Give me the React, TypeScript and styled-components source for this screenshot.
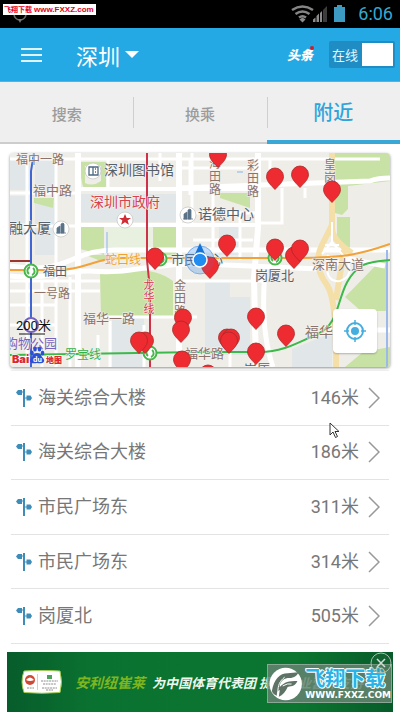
import React from "react";
import styled, { createGlobalStyle } from "styled-components";

const sans = `Roboto, "Noto Sans CJK SC", sans-serif`;
const cjk = `"Noto Sans CJK SC", sans-serif`;

const GlobalStyle = createGlobalStyle`
  * { box-sizing: border-box; }
  body { margin: 0; background: #fff; font-family: ${sans}; color: #777; }
  button { border: 0; padding: 0; background: none; font: inherit; color: inherit; cursor: pointer; }
  ul { list-style: none; margin: 0; padding: 0; }
  svg { display: block; }
`;

const Page = styled.div`
  position: relative;
  min-height: 100vh;
  display: flex;
  flex-direction: column;
  overflow: hidden;
`;

const StatusBar = styled.div`
  position: relative;
  display: flex;
  align-items: center;
  justify-content: flex-end;
  height: 28px;
  padding-right: 7px;
  background: #000;
`;

const LocationMark = styled.svg`
  position: absolute;
  left: 12px;
  top: 7px;
`;

const SiteTag = styled.div`
  position: absolute;
  left: 3px;
  top: 4px;
  display: flex;
  gap: 2px;
  padding: 0 2px 0 1px;
  background: #fff;
  color: #e2001a;
  font: 700 8px/11px "Liberation Sans", sans-serif;
  white-space: nowrap;
`;

const TagName = styled.span`
  font: 700 7px/11px ${cjk};
`;

const Clock = styled.time`
  margin-left: 12px;
  font-size: 18px;
  line-height: 28px;
  color: #35a9d2;
`;

const Header = styled.header`
  display: flex;
  align-items: center;
  height: 54px;
  padding: 0 5px 0 21px;
  background: #24a9e4;
  color: #fff;
  border-bottom: 1px solid #5fb0d4;
`;

const City = styled.button`
  display: flex;
  align-items: center;
  gap: 5px;
  margin-left: 34px;
  font: 400 22px/32px ${cjk};
  color: #fff;
`;

const Headlines = styled.button`
  position: relative;
  margin-left: auto;
  font: italic 900 13px/18px ${cjk};
  color: #fff;
`;

const Dot = styled.i`
  position: absolute;
  right: -1px;
  top: 0;
  width: 4px;
  height: 4px;
  border-radius: 50%;
  background: #c8202f;
`;

const OnlineSwitch = styled.label`
  display: flex;
  align-items: center;
  gap: 4px;
  height: 27px;
  margin-left: 16px;
  padding: 0 2px 0 3px;
  border-radius: 2px;
  background: #1f8dc3;
  font: 400 13px/27px ${cjk};
  color: #e6f6ff;
`;

const SwitchInput = styled.input`
  appearance: none;
  margin: 0;
  width: 31px;
  height: 23px;
  background: #fff;
`;

const Tabs = styled.nav`
  display: grid;
  grid-template-columns: repeat(3, 1fr);
  height: 62px;
  background: #efefef;
`;

const Tab = styled.button<{ $active?: boolean }>`
  position: relative;
  padding-top: ${(p) => (p.$active ? 2 : 4)}px;
  border-bottom: ${(p) => (p.$active ? "4px solid #3aa8d6" : "2px solid #cdcdcd")};
  font: ${(p) => (p.$active ? "500 20px" : "500 15px")}/24px ${cjk};
  color: ${(p) => (p.$active ? "#2fa4dc" : "#9c9c9c")};

  &:not(:first-child)::before {
    content: "";
    position: absolute;
    left: 0;
    top: 15px;
    width: 1px;
    height: 31px;
    background: #cfcfcf;
  }
`;

const MapCard = styled.section`
  position: relative;
  margin: 9px 10px 2px;
  border-radius: 4px;
  overflow: hidden;
  box-shadow: 0 1px 3px rgba(0, 0, 0, 0.45);
`;

const MapDrawing = styled.svg`
  width: 100%;
  height: auto;
  font-family: ${cjk};
`;

const LocateButton = styled.button`
  position: absolute;
  right: 13px;
  bottom: 14px;
  width: 44px;
  height: 44px;
  display: grid;
  place-items: center;
  border-radius: 4px;
  background: #fff;
  box-shadow: 0 1px 2px rgba(0, 0, 0, 0.25);
`;

const StopList = styled.ul`
  display: grid;
  grid-auto-rows: 1fr;
  min-height: 274px;
  margin: 1px 11px 0;
  border-top: 1px solid #f2f2f2;
`;

const StopItem = styled.li`
  display: flex;
  border-bottom: 1px solid #e3e3e3;
`;

const StopButton = styled.button`
  flex: 1;
  display: flex;
  align-items: center;
  padding: 0 9px 0 5px;
  font-size: 18px;
  line-height: 24px;
  color: #777;
`;

const StopName = styled.span`
  flex: 1;
  margin-left: 5px;
  text-align: left;
`;

const Distance = styled.span`
  margin-right: 9px;
`;

const Pointer = styled.svg`
  position: absolute;
  left: 329px;
  top: 422px;
`;

const Banner = styled.aside`
  position: relative;
  display: flex;
  align-items: center;
  height: 60px;
  margin: 8px 7px 0;
  padding-left: 14px;
  background: linear-gradient(90deg, #075c2b, #0a7230 22%, #0b7630 75%, #075b29);
  overflow: hidden;
`;

const Badge = styled.svg`
  flex: none;
`;

const Brand = styled.strong`
  margin-left: 12px;
  font: italic 700 14px/20px ${cjk};
  color: #7fb51f;
  white-space: nowrap;
`;

const Slogan = styled.span`
  margin-left: 7px;
  margin-top: 1px;
  font: italic 700 13px/20px ${cjk};
  color: #edf7ee;
  white-space: nowrap;
`;

const Watermark = styled.div`
  position: absolute;
  right: 1px;
  top: 12px;
  display: flex;
  align-items: center;
  gap: 3px;
  width: 125px;
  height: 39px;
  padding-left: 1px;
  border: 1px solid rgba(190, 205, 195, 0.5);
  background: rgba(100, 132, 112, 0.86);
`;

const MarkText = styled.div`
  display: flex;
  flex-direction: column;
  white-space: nowrap;
`;

const MarkName = styled.b`
  font: 700 20px/24px ${cjk};
  color: #2bb3e6;
  text-shadow: 1px 0 #f4fcff, -1px 0 #f4fcff, 0 1px #f4fcff, 0 -1px #f4fcff,
    1px 1px #f4fcff, -1px -1px #f4fcff;
`;

const MarkUrl = styled.b`
  font: 700 9px/11px "DejaVu Sans", sans-serif;
  color: #fff;
`;

const CloseButton = styled.button`
  position: absolute;
  right: 1px;
  top: 0;
  width: 22px;
  height: 22px;
`;

type Point = [number, number];

const pins: Point[] = [
  [218, 155], [275, 177], [300, 175], [332, 190], [227, 244], [275, 248],
  [294, 256], [300, 249], [155, 257], [210, 266], [183, 318], [181, 330],
  [145, 341], [139, 341], [227, 338], [231, 338], [229, 341], [256, 317],
  [286, 334], [256, 352], [182, 360], [208, 374],
];

type MapLabel = { t: string; x: number; y: number; s: number; c: string };

const brown = "#8b736d";
const slate = "#56606b";

const labels: MapLabel[] = [
  { t: "福中一路", x: 16, y: 164, s: 12, c: brown },
  { t: "福中路", x: 33, y: 195, s: 13, c: brown },
  { t: "深圳图书馆", x: 104, y: 175, s: 14, c: slate },
  { t: "深圳市政府", x: 90, y: 207, s: 14, c: "#d9414c" },
  { t: "诺德中心", x: 198, y: 219, s: 14, c: slate },
  { t: "融大厦", x: 9, y: 233, s: 14, c: slate },
  { t: "福田", x: 43, y: 276, s: 12, c: slate },
  { t: "蛇口线", x: 105, y: 264, s: 12, c: "#f0a030" },
  { t: "市民中心", x: 171, y: 264, s: 13, c: slate },
  { t: "岗厦北", x: 255, y: 280, s: 13, c: slate },
  { t: "深南大道", x: 312, y: 269, s: 13, c: brown },
  { t: "一号路", x: 34, y: 298, s: 12, c: brown },
  { t: "福华一路", x: 83, y: 323, s: 13, c: brown },
  { t: "福华路", x: 185, y: 358, s: 13, c: brown },
  { t: "福华", x: 305, y: 337, s: 14, c: brown },
  { t: "岗厦", x: 244, y: 374, s: 13, c: slate },
  { t: "购物公园", x: 5, y: 348, s: 13, c: "#7764ba" },
  { t: "罗宝线", x: 65, y: 359, s: 12, c: "#34b04a" },
];

const uprightLabels: MapLabel[] = [
  { t: "海田路", x: 215, y: 168, s: 12, c: brown },
  { t: "彩田路", x: 253, y: 170, s: 12, c: brown },
  { t: "皇岗", x: 330, y: 169, s: 12, c: brown },
  { t: "金田路", x: 180, y: 290, s: 12, c: brown },
  { t: "龙华线", x: 149, y: 289, s: 11, c: "#d23a4c" },
];

const Building = ({ at }: { at: Point }) => (
  <g transform={`translate(${at[0]} ${at[1]})`}>
    <circle r="8" fill="#fff" stroke="#c6c6c6" strokeWidth=".8" />
    <path d="M-4 4v-5l3-2v7zM0 4v-9l2-1 1 1v9zM-5 4H5" fill="#5b7388" stroke="#5b7388" strokeWidth=".8" />
  </g>
);

const Metro = ({ at }: { at: Point }) => (
  <g transform={`translate(${at[0]} ${at[1]})`}>
    <circle r="6.5" fill="#fff" stroke="#49b64b" strokeWidth="2" />
    <path d="M-1-4a4 4 0 0 0-1 7M1 4a4 4 0 0 0 1-7" fill="none" stroke="#49b64b" strokeWidth="2" />
  </g>
);

const CityMap = () => (
  <MapDrawing viewBox="10 153 380 214" role="img" aria-label="附近站点地图">
    <rect x="10" y="153" width="380" height="214" fill="#efede7" />
    <g fill="#e1e7e8">
      <path d="M10 159h20v31H10zM35 160h20v30H35zM10 196h18v27H10zM79 194h98v28H79zM219 225h20v30h-20zM205 281h25v16h20v58h-45zM112 317h32v50h-32zM292 349l40-16v34h-40zM35 203h20v52H35z" />
    </g>
    <g fill="#c8e2a6">
      <path d="M80 162h26v27H84q-4-10-4-27zM34 198h20l-1 10-19-5zM81 227h23v28l-24-6zM153 227h24v28h-24zM100 273q50-10 73 8v36h-72zM220 193h30v15l-30-10zM335 153h55v28l-42 5v23l-6 6-7-2zM337 217h13v32l-13-10zM345 297l35-36h6v50h-25zM345 367l18-15 27-5v20zM86 255h25l-8 7z" />
    </g>
    <path d="M85 166h16v15q-8 6-16 2z" fill="#efede7" />
    <path d="M108 227h43v27h-43z" fill="#e8f1df" />
    <g fill="none" stroke="#fff" strokeWidth="3">
      <path d="M10 159h370M10 193h68M56 153v214M10 226h68M27 160v200M160 153v28M192 153v72M108 160v28M10 291h90M10 305h45M10 325h45M10 281h90M70 277v90M42 280v87M144 325v42M102 317h95M183 281h82M190 160v35M213 190v62M178 168h80M193 240h60M282 188v35h-21M305 188v10M98 335v32M110 321v46M230 349v18M178 213h80M240 215v45M270 160v25" />
      <path d="M78 189h180M78 225h180" strokeWidth="4" />
      <path d="M78 153v214M179 153v214M258 153v75l-4 50 2 89" strokeWidth="6" />
      <path d="M178 188L370 181q8-3 20-3M10 276c35 4 55-6 80-5 40 4 60-8 110-7l120 5 30-10 35 7M10 266c60 10 60-18 110-16h270M330 330h60M265 270q-5 60 8 97" strokeWidth="5" />
    </g>
    <g fill="none" stroke="#f5dfa9" strokeWidth="6">
      <path d="M332 153v75q0 12 20 25M332 225l-10 20q-10 20 5 40 10 15 9 82M344 250l-8 50" />
    </g>
    <g fill="none" stroke="#fff" strokeWidth="2">
      <path d="M332 222v20l-10 12M332 242l15 18M325 245h14M328 255q-5 28 12 26 16-5 5-25" />
    </g>
    <path d="M387 250v117" stroke="#9bb9ea" strokeWidth="2" />
    <path d="M107 232v21M237 172h6" stroke="#85b5ea" />
    <path d="M10 270h48c28 0 38-13 68-12h160c55 0 70-2 104-14" fill="none" stroke="#f2a238" strokeWidth="2" />
    <path d="M10 261h21" stroke="#9b3732" strokeWidth="2" />
    <path d="M34 153l-3 18v196" fill="none" stroke="#3f66d2" strokeWidth="2" />
    <path d="M147 153v107l3 30v77" fill="none" stroke="#cf3149" strokeWidth="2" />
    <path d="M10 355l190-3h60c25 0 42-12 58-18 28-14 15-50 45-69 10-4 18-4 27-5" fill="none" stroke="#3bb94b" strokeWidth="2" />
    <Metro at={[31, 271]} />
    <Metro at={[160, 259]} />
    <Metro at={[150, 353]} />
    <Metro at={[275, 258]} />
    <circle cx="31" cy="325" r="7" fill="#fff" stroke="#7662bd" strokeWidth="2" />
    <g stroke="#f6f4f0" strokeWidth="1" paintOrder="stroke">
      {labels.map((l) => (
        <text key={l.t + l.x} x={l.x} y={l.y} fontSize={l.s} fill={l.c}>{l.t}</text>
      ))}
      {uprightLabels.map((l) => (
        <text key={l.t} fontSize={l.s} fill={l.c} textAnchor="middle">
          {l.t.split("").map((ch, i) => (
            <tspan key={ch} x={l.x} y={l.y + i * (l.s + 1)}>{ch}</tspan>
          ))}
        </text>
      ))}
    </g>
    <Building at={[61, 229]} />
    <Building at={[188, 215]} />
    <circle cx="93" cy="171" r="8" fill="#fff" stroke="#c6c6c6" strokeWidth=".8" />
    <path d="M89 167h4v8h-4zM93 167h5v8h-5zM95 169h1M95 172h1" fill="none" stroke="#4e6a83" strokeWidth="1.3" />
    <circle cx="125" cy="220" r="8" fill="#fff" stroke="#c6c6c6" strokeWidth=".8" />
    <path d="M125 214l1.7 4h4.3l-3.400 2.600 1.300 4.200-3.900-2.500-3.900 2.500 1.300-4.200L119 218h4.300z" fill="#cf2c36" />
    <circle cx="200" cy="260" r="14" fill="#4b95ed" fillOpacity=".22" stroke="#6da6e8" strokeWidth=".8" />
    <g fill="#ed2b31" stroke="#a82a2a" strokeWidth=".8">
      {pins.map(([x, y]) => (
        <path key={`${x}-${y}`} transform={`translate(${x} ${y})`} d="M0 12.500C-3 9-8.500 5-8.500-.5a8.500 8.500 0 0 1 17 0C8.500 5 3 9 0 12.500z" />
      ))}
    </g>
    <circle cx="200" cy="260" r="14" fill="#4b95ed" fillOpacity=".12" />
    <path d="M200 243l5 11h-10z" fill="#1673d8" />
    <circle cx="200" cy="260" r="7" fill="#228df0" stroke="#fff" strokeWidth="1.500" />
    <text x="16" y="330" fontSize="13" fill="#111" fontFamily={`Roboto, ${cjk}`}>200米</text>
    <path d="M19 334h26" stroke="#111" />
    <g stroke="#fff" strokeWidth="1.500" paintOrder="stroke">
      <text x="12" y="363" fontSize="11" fontWeight="900" fill="#dc2832" fontFamily="Inter, sans-serif">Bai</text>
      <text x="46" y="363" fontSize="8" fontWeight="900" fill="#dc2832">地图</text>
    </g>
    <g fill="#2d4fd6">
      <path d="M37 353c4 0 4 3 6 5 3 4 0 6-6 5-6 1-9-1-6-5 2-2 2-5 6-5z" />
      <ellipse cx="32" cy="353" rx="1.800" ry="2.500" />
      <ellipse cx="35" cy="349" rx="1.800" ry="2.500" />
      <ellipse cx="39.500" cy="349" rx="1.800" ry="2.500" />
      <ellipse cx="42.500" cy="353" rx="1.800" ry="2.500" />
    </g>
    <text x="33" y="362" fontSize="7" fontWeight="700" fill="#fff" fontFamily="Inter, sans-serif">du</text>
  </MapDrawing>
);

const SignIcon = () => (
  <svg width="17" height="20" viewBox="0 0 17 20" aria-hidden="true">
    <path d="M8 1v18" stroke="#3e8db9" strokeWidth="2" />
    <path d="M0 4.500L2 2h4v5H2zM10.500 7.500h4l1.500 2.500-1.500 2.500h-4z" fill="#3e8db9" />
    <path d="M6 4h2M8 10h3" stroke="#3e8db9" />
  </svg>
);

const stops = [
  { name: "海关综合大楼", distance: "146米" },
  { name: "海关综合大楼", distance: "186米" },
  { name: "市民广场东", distance: "311米" },
  { name: "市民广场东", distance: "314米" },
  { name: "岗厦北", distance: "505米" },
];

export default function App() {
  return (
    <>
      <GlobalStyle />
      <Page>
        <StatusBar>
          <LocationMark width="16" height="18" viewBox="0 0 16 18" aria-hidden="true">
            <circle cx="8" cy="7" r="6" fill="none" stroke="#666" strokeWidth="1.500" />
            <path d="M6 12h4l-2 4z" fill="#777" />
          </LocationMark>
          <SiteTag><TagName>飞翔下载</TagName>www.FXXZ.com</SiteTag>
          <svg width="55" height="18" viewBox="0 0 55 18" aria-hidden="true">
            <g fill="none" stroke="#858585" strokeWidth="2.500">
              <path d="M1 5q10.500-7 21 0M4.500 9q7-5 14 0M8 12.500q3.500-2.500 7 0" />
            </g>
            <path d="M8.500 14.500l3-2 3 2-3 3z" fill="#8c8c8c" />
            <path d="M22 17v-2.500l2.500-2V17zM25.500 17v-6l2.500-2.500V17zM29 17V8l2-2v11z" fill="#8c8c8c" />
            <path d="M32 17V5l4-4v16z" fill="#3c3c3c" />
            <path d="M43 2h3V0h5v2h3v15H43z" fill="#3d9bc3" />
          </svg>
          <Clock>6:06</Clock>
        </StatusBar>
        <Header>
          <button aria-label="菜单">
            <svg width="21" height="18" viewBox="0 0 21 18">
              <path d="M0 3h21M0 9h21M0 15h21" stroke="#dff4ff" strokeWidth="2" />
            </svg>
          </button>
          <City>
            深圳
            <svg width="14" height="8" viewBox="0 0 14 8" aria-hidden="true">
              <path d="M0 0h14L7 7z" fill="#fff" />
            </svg>
          </City>
          <Headlines>头条<Dot /></Headlines>
          <OnlineSwitch>
            在线
            <SwitchInput type="checkbox" role="switch" defaultChecked />
          </OnlineSwitch>
        </Header>
        <Tabs>
          <Tab>搜索</Tab>
          <Tab>换乘</Tab>
          <Tab $active aria-current="page">附近</Tab>
        </Tabs>
        <MapCard>
          <CityMap />
          <LocateButton aria-label="定位">
            <svg width="22" height="22" viewBox="0 0 22 22">
              <circle cx="11" cy="11" r="8" fill="none" stroke="#45aede" strokeWidth="2" />
              <circle cx="11" cy="11" r="4" fill="#45aede" />
              <path d="M11 0v5M11 17v5M0 11h5M17 11h5" stroke="#45aede" strokeWidth="1.500" />
            </svg>
          </LocateButton>
        </MapCard>
        <StopList>
          {stops.map((s) => (
            <StopItem key={s.distance}>
              <StopButton>
                <SignIcon />
                <StopName>{s.name}</StopName>
                <Distance>{s.distance}</Distance>
                <svg width="12" height="22" viewBox="0 0 12 22" aria-hidden="true">
                  <path d="M1 1l10 10L1 21" fill="none" stroke="#999" strokeWidth="1.500" />
                </svg>
              </StopButton>
            </StopItem>
          ))}
        </StopList>
        <Pointer width="11" height="17" viewBox="0 0 11 17" aria-hidden="true">
          <path d="M1 1v12l3-3 2.500 5.500 2-1L6 9.500h4z" fill="#fff" stroke="#333" />
        </Pointer>
        <Banner>
          <Badge width="42" height="24" viewBox="0 0 42 24" aria-hidden="true">
            <path d="M3 1q18-1.500 36 0 3 11 0 21.500-18 1.500-36 0Q-1 12 3 1z" fill="#fff" stroke="#9fca4f" />
            <circle cx="9" cy="10" r="5" fill="#cf4a35" />
            <path d="M5 10q4-5 8 0-4 2-8 0z" fill="#fff" />
            <path d="M6 18h7M20 11h17M22 14h13M21 18h15M25 20h7" stroke="#8e8e8e" strokeDasharray="2 .7" />
            <path d="M16.500 4v16" stroke="#bbb" strokeWidth=".7" />
            <path d="M26 5h5v4h-5z" fill="#49a35a" />
          </Badge>
          <Brand>安利纽崔莱</Brand>
          <Slogan>为中国体育代表团 提供专业营养支持</Slogan>
          <Watermark>
            <svg width="34" height="34" viewBox="0 0 34 34" aria-hidden="true">
              <circle cx="17" cy="17" r="16.500" fill="#fff" />
              <path d="M3 24C5 12 11 6 19 6l11-1c-2 5-6 6-11 6-5 1-8 4-8 9 5-5 9-6 18-6-2 5-5 5-10 6-2 5-5 8-9 10l1-7c-3 1-3 4-3 6-3-1-5-3-5-5z" fill="#5e7365" />
              <path d="M9 26c0-8 2-12 7-16M14 19q5-3 9-2" fill="none" stroke="#fff" />
            </svg>
            <MarkText>
              <MarkName>飞翔下载</MarkName>
              <MarkUrl>WWW.FXXZ.COM</MarkUrl>
            </MarkText>
          </Watermark>
          <CloseButton aria-label="关闭广告">
            <svg width="22" height="22" viewBox="0 0 22 22">
              <circle cx="11" cy="11" r="10" fill="#2c6d46" fillOpacity=".3" stroke="#a9bdb0" />
              <path d="M7 7l8 8M15 7l-8 8" stroke="#d4ddd7" strokeWidth="1.500" />
            </svg>
          </CloseButton>
        </Banner>
      </Page>
    </>
  );
}
